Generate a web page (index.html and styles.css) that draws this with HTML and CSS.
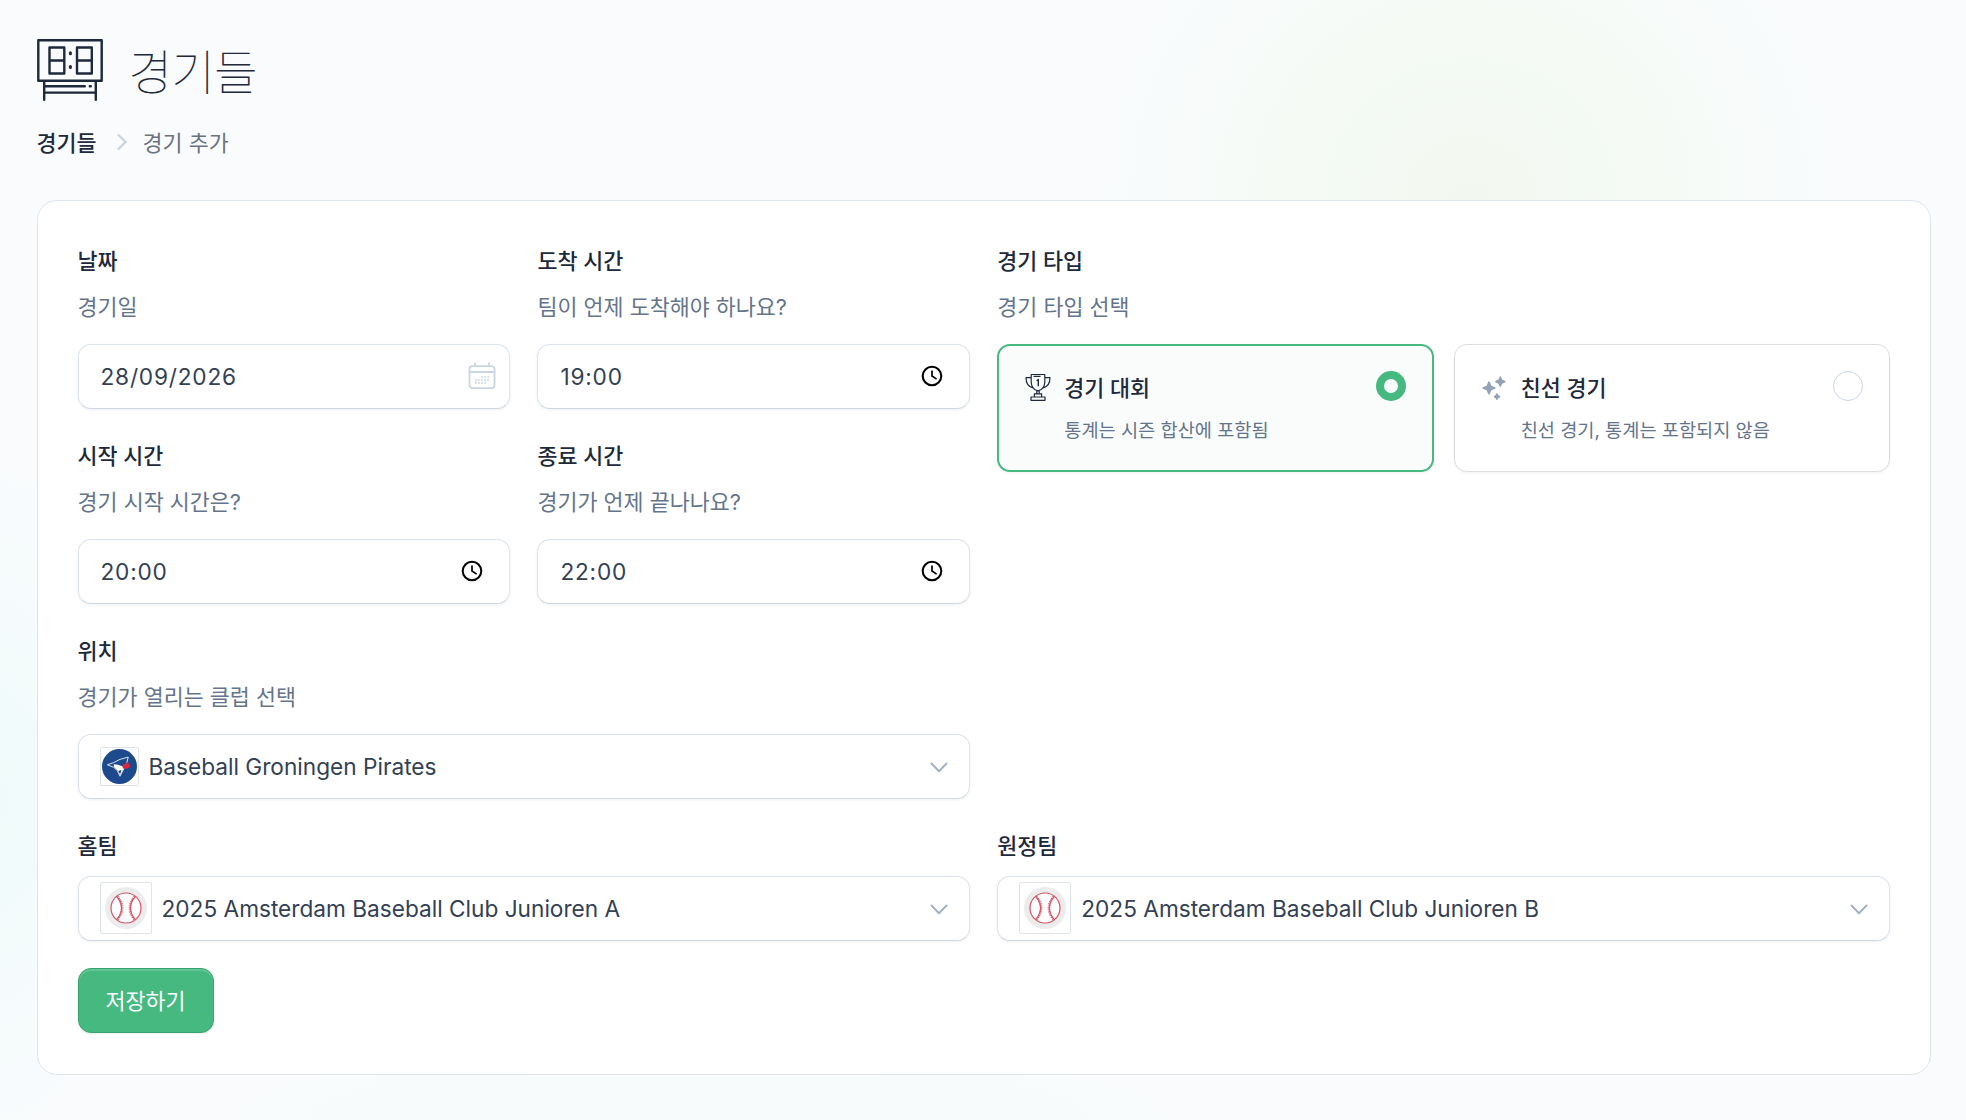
FILE: index.html
```html
<!DOCTYPE html>
<html lang="ko">
<head>
  <meta charset="UTF-8">
  <title>경기 추가</title>
  <link rel="stylesheet" href="styles.css">
</head>
<body>
  <header class="page-header">
    <svg class="scoreboard" viewBox="0 0 66 62" fill="none" stroke="currentColor" stroke-width="2.4" stroke-linecap="round" stroke-linejoin="round">
      <path d="M1.3 1.3h63.4v40.4H1.3zM12.5 8.5h14.8v26H12.5zM12.5 21.5h14.8M40 8.5h14.8v26H40zM40 21.5h14.8M7.2 42v18.7M58.8 42v18.7M7.2 53.6h51.6M9 47.2h38.8M52.8 47.2h1"/>
      <path d="M33.4 13.8v1M33.4 27.4v1" stroke-width="3"/>
    </svg>
    <h1>경기들</h1>
  </header>

  <nav class="breadcrumb">
    <a class="crumb">경기들</a>
    <svg class="crumb-arrow" viewBox="0 0 12 18" fill="none" stroke="currentColor" stroke-width="2.4"><path d="M2 1.5 9.5 9 2 16.5"/></svg>
    <span>경기 추가</span>
  </nav>

  <main class="panel">
    <div class="columns">
      <div class="fields">
        <div class="field">
          <div class="label">날짜</div>
          <div class="hint">경기일</div>
          <div class="input input-date">
            <span>28/09/2026</span>
            <svg class="calendar" viewBox="0 0 28 28" fill="none" stroke="currentColor" stroke-width="1.8" stroke-linecap="round">
              <rect x="1.5" y="4.2" width="25" height="22" rx="3"/>
              <path d="M1.5 10h25M7 1.2v3M21 1.2v3"/>
              <path d="M14 15h8M10.9 18h11.2M7.8 21h11" stroke-width="1.8" stroke-dasharray="0 3.1"/>
              <path d="M7.8 18h.1"/>
            </svg>
          </div>
        </div>
        <div class="field">
          <div class="label">도착 시간</div>
          <div class="hint">팀이 언제 도착해야 하나요?</div>
          <div class="input input-time">
            <span>19:00</span>
            <svg class="clock" viewBox="0 0 22 22" fill="none" stroke="currentColor" stroke-width="2.1"><circle cx="11" cy="11" r="9.3"/><path d="M11 5.5V11l4.6 3.1" stroke-width="1.7"/></svg>
          </div>
        </div>
        <div class="field">
          <div class="label">시작 시간</div>
          <div class="hint">경기 시작 시간은?</div>
          <div class="input input-time">
            <span>20:00</span>
            <svg class="clock" viewBox="0 0 22 22" fill="none" stroke="currentColor" stroke-width="2.1"><circle cx="11" cy="11" r="9.3"/><path d="M11 5.5V11l4.6 3.1" stroke-width="1.7"/></svg>
          </div>
        </div>
        <div class="field">
          <div class="label">종료 시간</div>
          <div class="hint">경기가 언제 끝나나요?</div>
          <div class="input input-time">
            <span>22:00</span>
            <svg class="clock" viewBox="0 0 22 22" fill="none" stroke="currentColor" stroke-width="2.1"><circle cx="11" cy="11" r="9.3"/><path d="M11 5.5V11l4.6 3.1" stroke-width="1.7"/></svg>
          </div>
        </div>
        <div class="field field-wide">
          <div class="label">위치</div>
          <div class="hint">경기가 열리는 클럽 선택</div>
          <div class="input select">
            <span class="logo logo-club">
              <svg viewBox="0 0 36 36">
                <circle cx="18" cy="18" r="18" fill="#1d4a8c"/>
                <path d="M5.5 16.2 12 14Q17.500 10.200 27 8.300L25.500 14 22.500 20 18.500 28 15.800 22.300 12 18.800Z" fill="#1d4a8c" stroke="#dfe7f2" stroke-width="1" stroke-linejoin="round"/>
                <path d="m12 15.800 4.500.4 5 1.800.5 2.500-3.400 6.500-2.400-5-3.700-3.200Z" fill="#fff"/>
                <path d="m16.800 22.500 3.200-1-1.400 4.200Z" fill="#17335f"/>
                <path d="m25 13.500 1.200 1.400 2-.4-.3 2 1.800 1-3 2.300-3.200.9-2.500-2 .8-3 2 .1Z" fill="#e0243c"/>
              </svg>
            </span>
            <span>Baseball Groningen Pirates</span>
            <svg class="chevron" viewBox="0 0 18 11" fill="none" stroke="currentColor" stroke-width="2" stroke-linecap="round" stroke-linejoin="round"><path d="m1.5 1.5 7.5 7.7 7.5-7.7"/></svg>
          </div>
        </div>
      </div>

      <div class="field">
        <div class="label">경기 타입</div>
        <div class="hint">경기 타입 선택</div>
        <div class="options">
          <div class="option selected">
            <svg class="trophy" viewBox="0 0 26 28" fill="none" stroke="currentColor" stroke-width="1.2" stroke-linejoin="round">
              <path d="M6.2 1.5h13.6v7.2q0 7.2-6.8 9.2-6.8-2-6.8-9.2ZM6.2 4.6H1q0 9.2 7.4 10.5M19.8 4.6H25q0 9.2-7.4 10.5M11.8 18v2.8h2.4V18M9.4 24v-3.2h7.2V24M6 24h14v3.3H6ZM8.5 3.3h7"/>
              <path d="m11.6 7.8 1.7-1.2v6.7" stroke-width="1.4"/>
            </svg>
            <div class="option-text">
              <div class="option-title">경기 대회</div>
              <div class="option-desc">통계는 시즌 합산에 포함됨</div>
            </div>
            <span class="radio"></span>
          </div>
          <div class="option">
            <svg class="sparkles" viewBox="0 0 26 26" fill="currentColor" stroke="currentColor" stroke-width="1.8" stroke-linejoin="round">
              <path d="M8 7.3 9.7 11.3 13.7 13 9.7 14.7 8 18.7 6.3 14.7 2.3 13 6.3 11.3ZM19.3 2.3l1.3 3 3 1.3-3 1.3-1.3 3-1.3-3-3-1.3 3-1.3ZM16 19.3l.9 1.5 1.5.9-1.5.9-.9 1.5-.9-1.5-1.5-.9 1.5-.9Z"/>
            </svg>
            <div class="option-text">
              <div class="option-title">친선 경기</div>
              <div class="option-desc">친선 경기, 통계는 포함되지 않음</div>
            </div>
            <span class="radio"></span>
          </div>
        </div>
      </div>

      <div class="field">
        <div class="label label-only">홈팀</div>
        <div class="input select">
          <span class="logo logo-team">
            <svg viewBox="0 0 44 44" fill="none" stroke="#d65467">
              <circle cx="22" cy="22" r="21" fill="#ececec" stroke="none"/>
              <circle cx="22" cy="22" r="15" fill="#fff" stroke-width="1.2"/>
              <path d="M12.8 10.5q9.5 11.5 0 23M31.2 10.5q-9.5 11.5 0 23" stroke-width="1.2"/>
              <path d="M13.4 10.5q9.5 11.5 0 23M30.6 10.5q-9.5 11.5 0 23" stroke-width="2.4" stroke-dasharray="1 1"/>
            </svg>
          </span>
          <span>2025 Amsterdam Baseball Club Junioren A</span>
          <svg class="chevron" viewBox="0 0 18 11" fill="none" stroke="currentColor" stroke-width="2" stroke-linecap="round" stroke-linejoin="round"><path d="m1.5 1.5 7.5 7.7 7.5-7.7"/></svg>
        </div>
      </div>
      <div class="field">
        <div class="label label-only">원정팀</div>
        <div class="input select">
          <span class="logo logo-team">
            <svg viewBox="0 0 44 44" fill="none" stroke="#d65467">
              <circle cx="22" cy="22" r="21" fill="#ececec" stroke="none"/>
              <circle cx="22" cy="22" r="15" fill="#fff" stroke-width="1.2"/>
              <path d="M12.8 10.5q9.5 11.5 0 23M31.2 10.5q-9.5 11.5 0 23" stroke-width="1.2"/>
              <path d="M13.4 10.5q9.5 11.5 0 23M30.6 10.5q-9.5 11.5 0 23" stroke-width="2.4" stroke-dasharray="1 1"/>
            </svg>
          </span>
          <span>2025 Amsterdam Baseball Club Junioren B</span>
          <svg class="chevron" viewBox="0 0 18 11" fill="none" stroke="currentColor" stroke-width="2" stroke-linecap="round" stroke-linejoin="round"><path d="m1.5 1.5 7.5 7.7 7.5-7.7"/></svg>
        </div>
      </div>
    </div>

    <button class="save">저장하기</button>
  </main>
</body>
</html>
```
FILE: styles.css
```css
:root {
  --green: #45b980;
  --heading: #1e293b;
  --text: #334155;
  --muted: #64748b;
  --icon: #94a3b8;
  --border: #e2e8f0;
}

* {
  box-sizing: border-box;
}

body {
  margin: 0;
  padding: 38px 35px 46px 36.5px;
  height: 1120px;
  overflow: hidden;
  font-family: Inter, "Noto Sans CJK KR", sans-serif;
  font-size: 21.75px;
  color: var(--text);
  background:
    radial-gradient(ellipse 370px 360px at 1470px 200px, #f2f8f0 0%, #f5faf5 50%, #f8fbfa 80%, rgba(248, 250, 252, 0) 100%),
    radial-gradient(ellipse 140px 330px at 0 800px, #effbfa, rgba(248, 250, 252, 0)),
    radial-gradient(ellipse 500px 80px at 700px 1120px, #f7fbfb, rgba(248, 250, 252, 0)),
    #f9fbfd;
}

svg {
  display: block;
  flex-shrink: 0;
}

.page-header {
  display: flex;
  align-items: center;
  gap: 26px;
  height: 66px;
  color: var(--heading);
}

.scoreboard {
  width: 66px;
  height: 62px;
  margin-bottom: 2px;
}

h1 {
  margin: 0;
  padding-top: 4px;
  font-size: 47.5px;
  line-height: 66px;
  font-weight: 100;
  letter-spacing: -1px;
}

.breadcrumb {
  display: flex;
  align-items: center;
  height: 40px;
  margin: 17px 0 38.5px;
  color: #6b7280;
}

.crumb {
  color: var(--heading);
  font-weight: 500;
}

.crumb-arrow {
  width: 12px;
  height: 18px;
  margin: 2px 15px 0 19px;
  color: #cbd5e1;
}

.panel {
  height: 875px;
  padding: 40px;
  background: #fff;
  border: 1px solid #dfe6ee;
  border-radius: 20px;
}

.columns,
.fields {
  display: grid;
  grid-template-columns: 1fr 1fr;
  gap: 27px;
}

.field-wide {
  grid-column: span 2;
}

.label {
  height: 40px;
  line-height: 40px;
  font-weight: 500;
  color: var(--heading);
}

.label-only {
  margin-bottom: 10px;
}

.hint {
  height: 50px;
  line-height: 53px;
  margin-bottom: 13px;
  color: var(--muted);
}

.input {
  display: flex;
  align-items: center;
  height: 65px;
  padding: 0 21px;
  background: #fff;
  border: 1.5px solid #dde4ee;
  border-bottom-color: #cfd8e5;
  border-radius: 13px;
  box-shadow: 0 1px 3px rgba(15, 23, 42, 0.07);
  font-size: 22.65px;
}

.input-date,
.input-time {
  justify-content: space-between;
  padding-left: 22px;
  letter-spacing: 0.8px;
}

.input-date {
  padding-right: 13px;
}

.input-time {
  padding-right: 26px;
}

.calendar {
  width: 28px;
  height: 28px;
  color: #cbd5e1;
}

.clock {
  width: 22px;
  height: 22px;
  margin-bottom: 1px;
  color: #000;
}

.logo {
  background: #fff;
  border: 1px solid #dfe4ec;
  border-radius: 2px;
}

.logo-club {
  width: 39px;
  height: 39px;
  padding: 1px;
  margin-right: 10px;
}

.logo-team {
  width: 52px;
  height: 52px;
  padding: 3px;
  margin-right: 10px;
}

.chevron {
  width: 18px;
  height: 11px;
  margin: 2px 0 0 auto;
  color: #a3b1c6;
}

.options {
  display: grid;
  grid-template-columns: 1fr 1fr;
  gap: 20px;
}

.option {
  display: flex;
  height: 128px;
  padding: 26px;
  background: #fff;
  border: 1.5px solid #dcdfe4;
  border-radius: 13px;
  box-shadow: 0 1px 3px rgba(15, 23, 42, 0.06);
}

.option.selected {
  padding: 25px 26px;
  border: 2px solid var(--green);
  background: #fafcfb;
}

.trophy {
  width: 26px;
  height: 28px;
  margin: 2px 13px 0 0;
  color: var(--heading);
}

.sparkles {
  width: 26px;
  height: 26px;
  margin: 4px 14px 0 0;
  color: var(--icon);
}

.option-text {
  flex: 1;
}

.option-title {
  height: 34px;
  line-height: 34px;
  font-weight: 500;
  color: var(--heading);
}

.option-desc {
  height: 30px;
  line-height: 30px;
  margin-top: 10px;
  font-size: 18.65px;
  color: var(--muted);
}

.radio {
  width: 30px;
  height: 30px;
  border: 1.5px solid #cbd5e1;
  border-radius: 50%;
}

.selected .radio {
  border: 8px solid var(--green);
}

.save {
  display: block;
  height: 65px;
  width: 136px;
  margin-top: 27px;
  padding: 0 0 2px;
  border: 1px solid #36a46e;
  border-radius: 13px;
  background: var(--green);
  box-shadow: inset 0 2px 0 rgba(255, 255, 255, 0.18), 0 1px 2px rgba(15, 23, 42, 0.08);
  color: #fff;
  font-family: inherit;
  font-size: 21.75px;
  font-weight: 400;
}
```
